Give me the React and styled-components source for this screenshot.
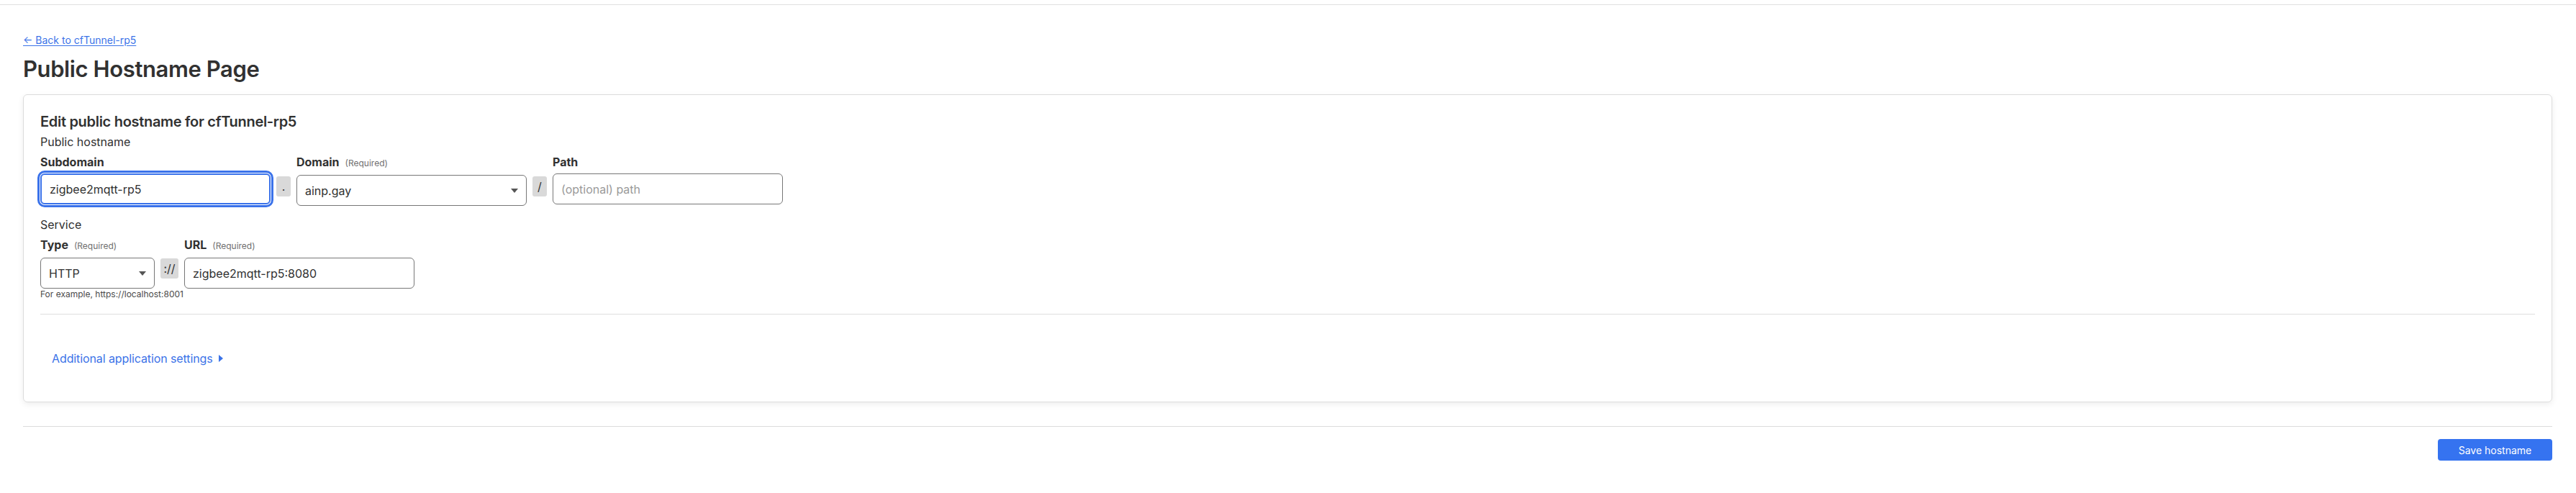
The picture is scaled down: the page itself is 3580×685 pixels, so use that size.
import React from 'react';
import styled, { createGlobalStyle } from 'styled-components';

const GlobalStyle = createGlobalStyle`
  body {
    margin: 0;
    background: #fff;
    font-family: Inter, "Noto Sans", "Liberation Sans", sans-serif;
    color: #313131;
  }
`;

const TopBar = styled.div`
  height: 6px;
  border-bottom: 1px solid #e0e0e0;
`;

const Page = styled.div`
  padding: 38px 33px 40px 32px;
`;

const BackLink = styled.a`
  display: inline-block;
  font-size: 14px;
  line-height: 20px;
  color: #3b73e8;
  text-decoration: underline;
  text-underline-offset: 2px;
`;

const Title = styled.h1`
  margin: 10px 0 15px;
  font-size: 31px;
  line-height: 40px;
  font-weight: 600;
  letter-spacing: -0.4px;
  color: #313131;
`;

const Card = styled.section`
  border: 1px solid #dcdcdc;
  border-radius: 6px;
  box-shadow: 0 3px 8px rgba(0, 0, 0, 0.07);
  padding: 23px 23px 24px 23px;
`;

const CardTitle = styled.h2`
  margin: 0 0 2px;
  font-size: 20px;
  line-height: 28px;
  font-weight: 600;
  letter-spacing: -0.3px;
`;

const GroupTitle = styled.div`
  font-size: 16px;
  line-height: 24px;
  margin-bottom: ${p => p.$gap || 4}px;
`;

const Row = styled.div`
  display: flex;
  align-items: flex-start;
  gap: 8px;
`;

const Field = styled.div`
  display: flex;
  flex-direction: column;
  width: ${p => p.$width || 320}px;
`;

const Label = styled.div`
  display: flex;
  align-items: baseline;
  gap: 8px;
  font-size: 16px;
  line-height: 24px;
  font-weight: 700;
  margin-bottom: 4px;
`;

const Required = styled.span`
  font-size: 12px;
  font-weight: 400;
  color: #6f6f6f;
`;

const Input = styled.div`
  box-sizing: border-box;
  height: 43px;
  display: flex;
  align-items: center;
  justify-content: space-between;
  padding: 0 11px;
  border: ${p => (p.$focused ? '2px solid #3a72ea' : '1px solid #777')};
  border-radius: 6px;
  box-shadow: ${p => (p.$focused ? '0 0 0 1px #fff, 0 0 0 4px #3a72ea' : 'none')};
  font-size: 16px;
  color: ${p => (p.$placeholder ? '#9a9a9a' : '#313131')};
  background: #fff;
`;

const Addon = styled.div`
  box-sizing: border-box;
  margin-top: ${p => p.$offset}px;
  width: ${p => p.$width || 20}px;
  height: 28px;
  display: flex;
  align-items: center;
  justify-content: center;
  background: #d9d9d9;
  border-radius: 3px;
  font-size: 16px;
  color: #313131;
`;

const Helper = styled.div`
  font-size: 12px;
  line-height: 16px;
  color: #4a4a4a;
  white-space: nowrap;
`;

const Section = styled.div`
  margin-top: 14px;
`;

const Divider = styled.hr`
  margin: 19px 0 0;
  border: 0;
  border-top: 1px solid #dedede;
`;

const Expander = styled.div`
  padding: 49px 16px 24px;
`;

const ExpanderLink = styled.span`
  display: inline-flex;
  align-items: center;
  gap: 8px;
  font-size: 16px;
  line-height: 24px;
  letter-spacing: -0.1px;
  color: #3b73e8;
`;

const Footer = styled.div`
  margin-top: 33px;
  border-top: 1px solid #dcdcdc;
  padding-top: 17px;
  display: flex;
  justify-content: flex-end;
`;

const SaveButton = styled.button`
  width: 159px;
  height: 30px;
  border: 0;
  border-radius: 4px;
  background: #3573f0;
  color: #fff;
  font-family: inherit;
  font-size: 14px;
`;

const Caret = ({ dir = 'down', color = '#555' }) =>
  dir === 'down' ? (
    <svg width="10" height="6" viewBox="0 0 10 6"><path d="M0 0h10L5 6z" fill={color} /></svg>
  ) : (
    <svg width="6" height="10" viewBox="0 0 6 10"><path d="M0 0l6 5-6 5z" fill={color} /></svg>
  );

export default function App() {
  return (
    <>
      <GlobalStyle />
      <TopBar />
      <Page>
        <BackLink href="#">← Back to cfTunnel-rp5</BackLink>
        <Title>Public Hostname Page</Title>
        <Card>
          <CardTitle>Edit public hostname for cfTunnel-rp5</CardTitle>
          <GroupTitle>Public hostname</GroupTitle>
          <Row>
            <Field>
              <Label>Subdomain</Label>
              <Input $focused>zigbee2mqtt-rp5</Input>
            </Field>
            <Addon $offset={32}>.</Addon>
            <Field>
              <Label>Domain <Required>(Required)</Required></Label>
              <Input>ainp.gay<Caret /></Input>
            </Field>
            <Addon $offset={32}>/</Addon>
            <Field>
              <Label>Path</Label>
              <Input $placeholder>(optional) path</Input>
            </Field>
          </Row>
          <Section>
            <GroupTitle>Service</GroupTitle>
            <Row>
              <Field $width={159}>
                <Label>Type <Required>(Required)</Required></Label>
                <Input>HTTP<Caret /></Input>
                <Helper>For example, https://localhost:8001</Helper>
              </Field>
              <Addon $offset={31} $width={25}>://</Addon>
              <Field>
                <Label>URL <Required>(Required)</Required></Label>
                <Input>zigbee2mqtt-rp5:8080</Input>
              </Field>
            </Row>
          </Section>
          <Divider />
          <Expander>
            <ExpanderLink>Additional application settings <Caret dir="right" color="#3b73e8" /></ExpanderLink>
          </Expander>
        </Card>
        <Footer>
          <SaveButton>Save hostname</SaveButton>
        </Footer>
      </Page>
    </>
  );
}
